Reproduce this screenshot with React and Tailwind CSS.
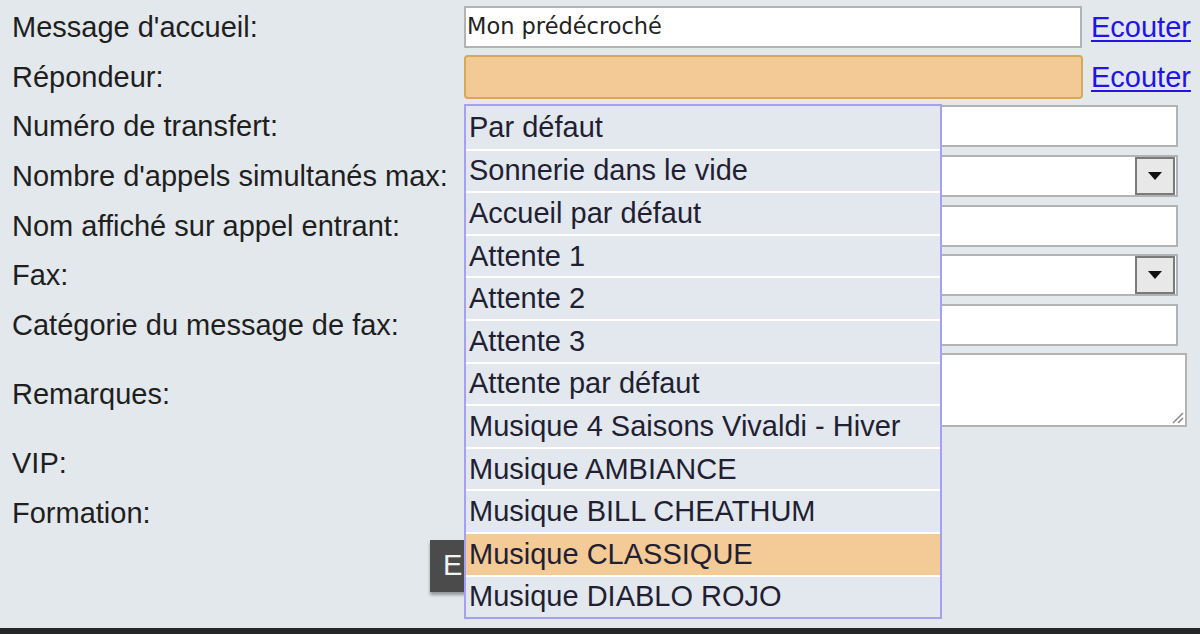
import React from "react";

const options = [
  "Par défaut",
  "Sonnerie dans le vide",
  "Accueil par défaut",
  "Attente 1",
  "Attente 2",
  "Attente 3",
  "Attente par défaut",
  "Musique 4 Saisons Vivaldi - Hiver",
  "Musique AMBIANCE",
  "Musique BILL CHEATHUM",
  "Musique CLASSIQUE",
  "Musique DIABLO ROJO",
];

function Label({ children }) {
  return (
    <div className="w-[452px] shrink-0 whitespace-nowrap text-[29px] leading-none text-[#1f1f1f]">
      {children}
    </div>
  );
}

function TextInput({ value = "", className = "" }) {
  return (
    <div
      className={`flex h-[42px] items-center border-2 border-[#b3b3b3] bg-white px-[1px] font-['DejaVu_Sans',sans-serif] text-[22.5px] text-[#222] ${className}`}
    >
      {value}
    </div>
  );
}

function SelectBox() {
  return (
    <div className="flex h-[42px] w-[714px] items-center justify-end border-2 border-[#b3b3b3] bg-white pr-[1px]">
      <div className="flex h-[38px] w-[40px] items-center justify-center border-2 border-[#7a7a7a] bg-[#e8e8e8]">
        <svg width="16" height="10" viewBox="0 0 16 10">
          <path d="M1 1h14L8 9z" fill="#111" />
        </svg>
      </div>
    </div>
  );
}

function Ecouter({ className = "" }) {
  return (
    <a href="#" className={`text-[29px] leading-none text-[#2214e8] underline decoration-2 underline-offset-[3px] ${className}`}>
      Ecouter
    </a>
  );
}

export default function App() {
  return (
    <div className="relative flex h-[634px] w-[1200px] flex-col overflow-hidden bg-[#e3e8ec] pl-3 font-['Liberation_Sans',Arial,sans-serif]">
      <div className="mt-[6px] flex h-[42px] items-center">
        <Label>Message d'accueil:</Label>
        <TextInput value="Mon prédécroché" className="w-[618px]" />
        <Ecouter className="ml-[9px]" />
      </div>
      <div className="mt-[7px] flex h-[44px] items-center">
        <Label>Répondeur:</Label>
        <div className="h-[44px] w-[619px] rounded-[4px] border-2 border-[#d8a852] bg-[#f3ca96]" />
        <Ecouter className="ml-[8px]" />
      </div>
      <div className="mt-[6px] flex h-[42px] items-center">
        <Label>Numéro de transfert:</Label>
        <TextInput className="w-[714px]" />
      </div>
      <div className="mt-[8px] flex h-[42px] items-center">
        <Label>Nombre d'appels simultanés max:</Label>
        <SelectBox />
      </div>
      <div className="mt-[8px] flex h-[42px] items-center">
        <Label>Nom affiché sur appel entrant:</Label>
        <TextInput className="w-[714px]" />
      </div>
      <div className="mt-[7px] flex h-[42px] items-center">
        <Label>Fax:</Label>
        <SelectBox />
      </div>
      <div className="mt-[8px] flex h-[42px] items-center">
        <Label>Catégorie du message de fax:</Label>
        <TextInput className="w-[714px]" />
      </div>
      <div className="mt-[7px] flex h-[74px] items-center">
        <Label>
          <span className="relative top-[4px]">Remarques:</span>
        </Label>
        <div className="relative h-[74px] w-[723px] border-2 border-[#b3b3b3] bg-white">
          <svg className="absolute bottom-[1px] right-[1px]" width="14" height="14" viewBox="0 0 14 14">
            <path d="M13 3L3 13M13 8L8 13" stroke="#8a8a8a" strokeWidth="1.5" />
          </svg>
        </div>
      </div>
      <div className="mt-[13px] flex h-[46px] items-center">
        <Label>VIP:</Label>
        <div className="h-[22px] w-[22px] border-2 border-[#888] bg-white" />
      </div>
      <div className="mt-[4px] flex h-[46px] items-center">
        <Label>Formation:</Label>
        <div className="h-[22px] w-[22px] border-2 border-[#888] bg-white" />
      </div>
      <div className="mt-[4px] pl-[418px]">
        <button
          type="button"
          className="h-[52px] w-[120px] bg-[#4b4b4b] pl-[13px] text-left text-[29px] text-[#f2f2f2] shadow-[0_3px_3px_rgba(0,0,0,0.35)]"
        >
          E
        </button>
      </div>
      <div className="-ml-3 mt-auto h-[6px] w-[1200px] bg-[#262626]" />

      <div className="absolute left-[464px] top-[104px] w-[478px] border-2 border-[#a3a0f6] bg-[#e3e8ee]">
        {options.map((opt, i) => (
          <div
            key={opt}
            className={`flex h-[42.6px] items-center pl-[3px] text-[29px] leading-none text-[#221f33] ${
              i > 0 ? "border-t-2 border-white" : ""
            } ${opt === "Musique CLASSIQUE" ? "bg-[#f4ca96]" : ""}`}
          >
            {opt}
          </div>
        ))}
      </div>
    </div>
  );
}
